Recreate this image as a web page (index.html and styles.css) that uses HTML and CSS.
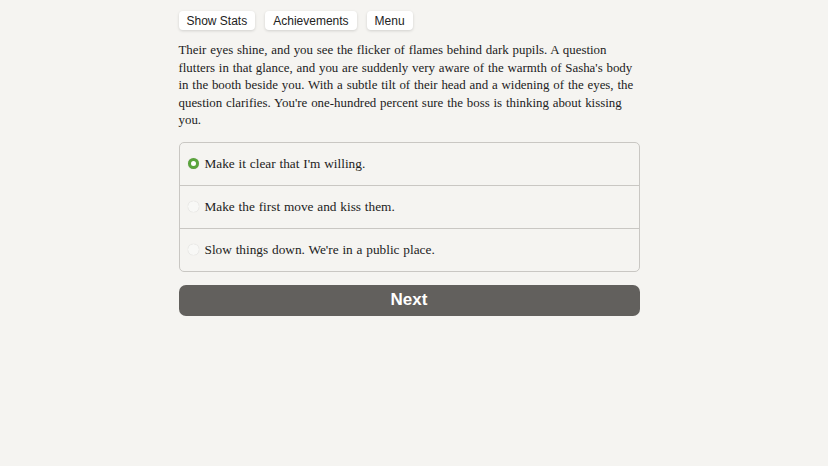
FILE: index.html
```html
<!DOCTYPE html>
<html lang="en">
<head>
    <meta charset="UTF-8">
    <meta name="viewport" content="width=device-width, initial-scale=1.0">
    <title>Choice</title>
    <link rel="stylesheet" href="styles.css">
</head>
<body>
    <div class="container">
        <div class="buttons">
            <button class="top-btn">Show Stats</button>
            <button class="top-btn">Achievements</button>
            <button class="top-btn">Menu</button>
        </div>

        <p class="story">Their eyes shine, and you see the flicker of flames behind dark pupils. A question flutters in that glance, and you are suddenly very aware of the warmth of Sasha's body in the booth beside you. With a subtle tilt of their head and a widening of the eyes, the question clarifies. You're one-hundred percent sure the boss is thinking about kissing you.</p>

        <div class="choices">
            <label class="choice">
                <span class="radio checked"></span>
                Make it clear that I'm willing.
            </label>
            <label class="choice">
                <span class="radio"></span>
                Make the first move and kiss them.
            </label>
            <label class="choice">
                <span class="radio"></span>
                Slow things down. We're in a public place.
            </label>
        </div>

        <button class="next">Next</button>
    </div>
</body>
</html>
```

FILE: styles.css
```css
body {
    margin: 0;
    background-color: #f5f4f1;
    color: #222;
    font-family: "Liberation Serif", serif;
}
.container {
    width: 461px;
    margin: 0 auto;
    padding-top: 11px;
    position: relative;
    left: -5px;
}
.buttons {
    display: flex;
    gap: 10px;
}
.top-btn {
    font-family: "Liberation Sans", sans-serif;
    font-size: 12px;
    color: #222;
    background: #fff;
    border: none;
    border-radius: 4px;
    padding: 0 8px;
    height: 19px;
    box-shadow: 0 1px 3px rgba(0, 0, 0, 0.15);
}
.story {
    font-size: 12.9px;
    word-spacing: 0.6px;
    line-height: 17.5px;
    margin: 12px 0 13px;
}
.choices {
    border: 1px solid #c9c7c3;
    border-radius: 5px;
    overflow: hidden;
    margin-top: -1px;
}
.choice {
    display: flex;
    align-items: center;
    gap: 6px;
    height: 42px;
    padding-left: 8px;
    font-size: 13.3px;
    word-spacing: 0.5px;
    border-top: 1px solid #c9c7c3;
}
.choice:first-child {
    border-top: none;
}
.radio {
    width: 11px;
    height: 11px;
    border-radius: 50%;
    background: #f8f8f6;
    box-shadow: 0 0 1px rgba(0, 0, 0, 0.2);
}
.radio.checked {
    width: 5px;
    height: 5px;
    background: #fff;
    border: 3px solid #5aa43c;
}
.next {
    display: block;
    width: 100%;
    height: 31px;
    margin-top: 13px;
    background: #62605d;
    color: #fff;
    border: none;
    border-radius: 7px;
    font-family: "Liberation Sans", sans-serif;
    font-size: 17px;
    font-weight: bold;
}
```
